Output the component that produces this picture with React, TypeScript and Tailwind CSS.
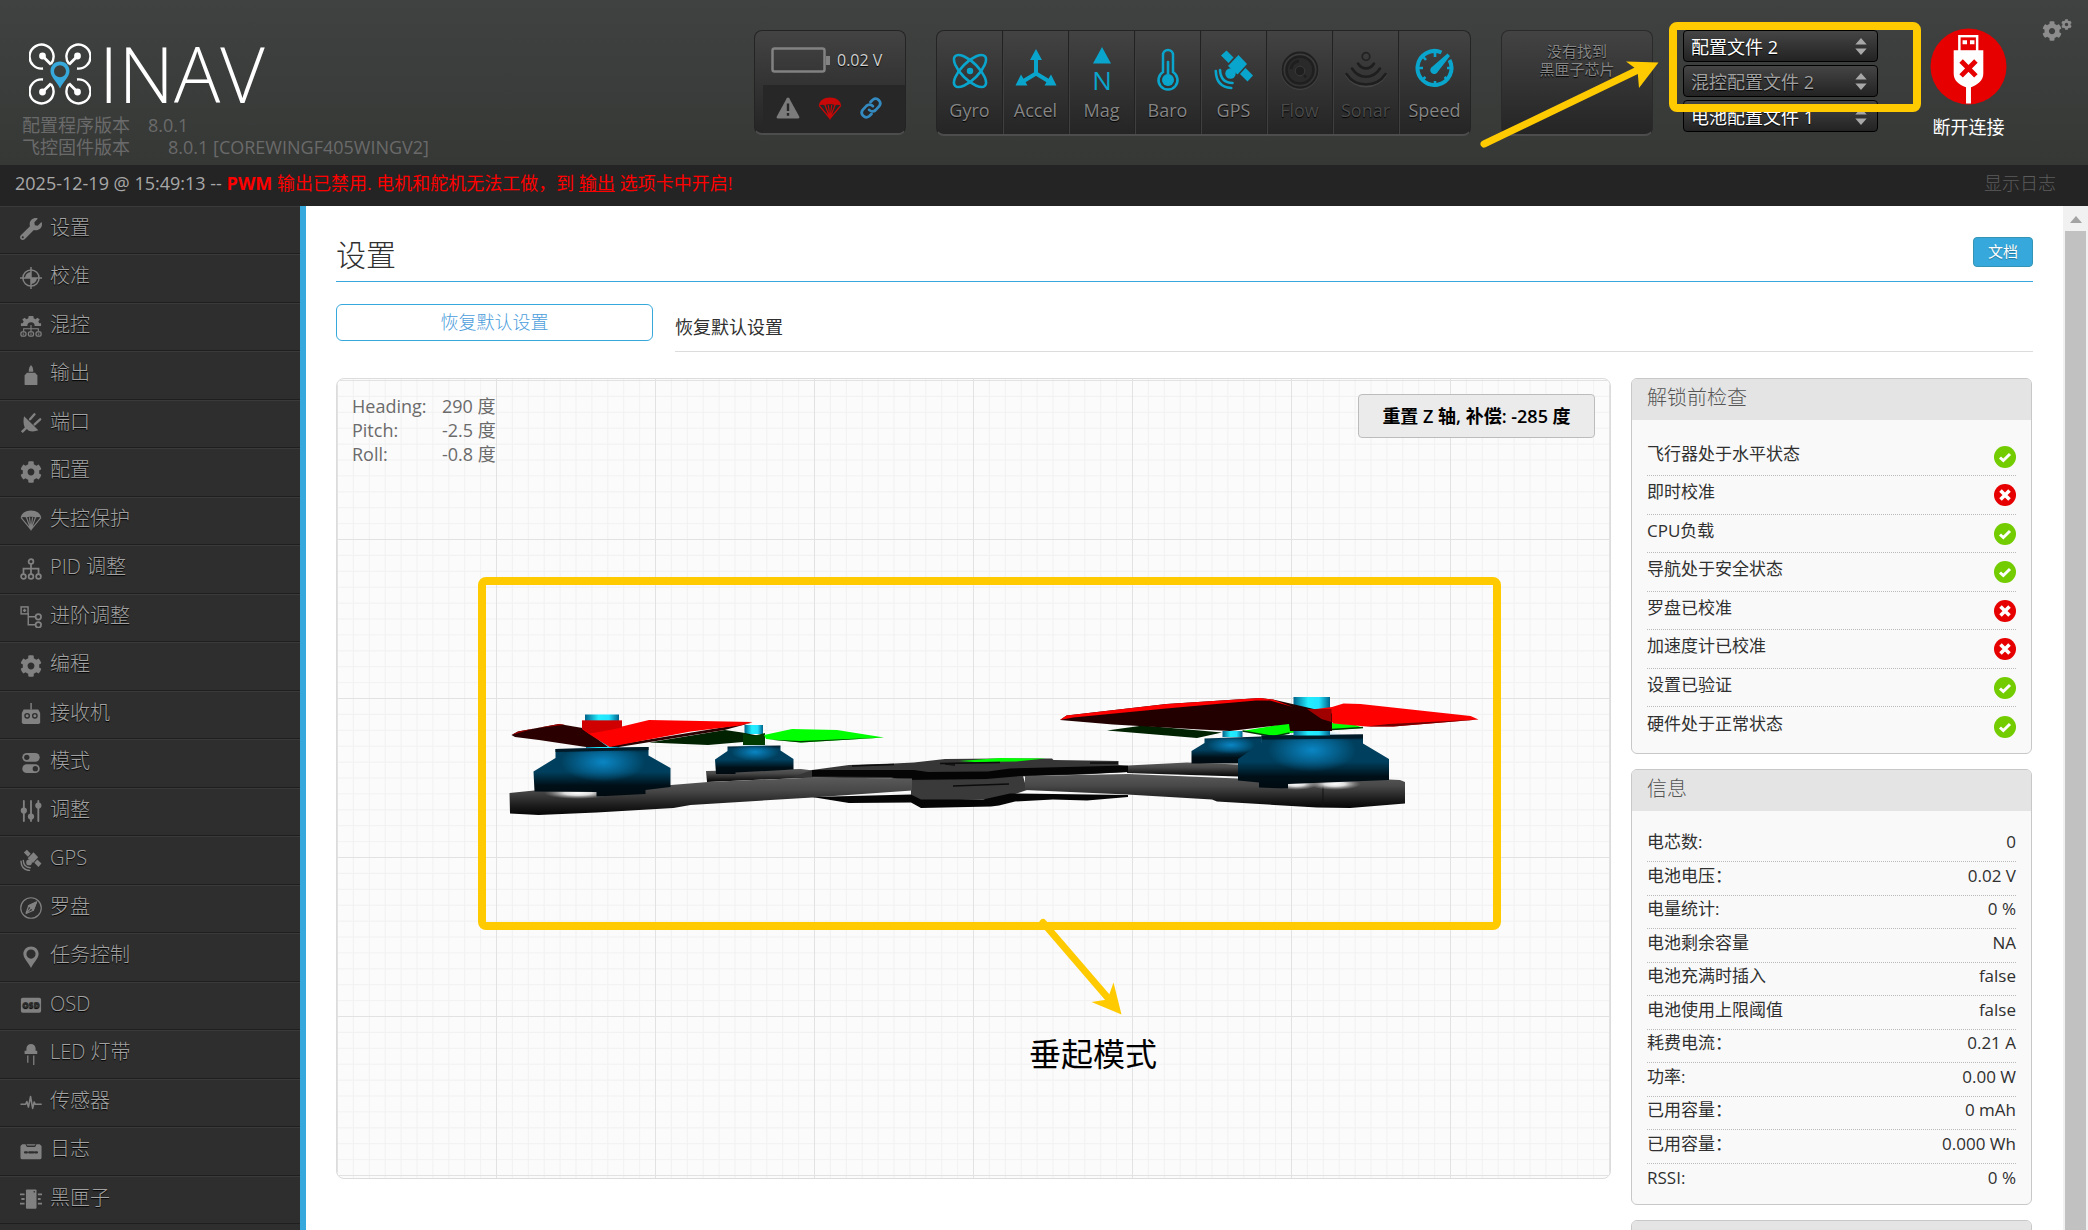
import React from 'react';
import { FaCog, FaWrench } from 'react-icons/fa';

interface IconProps {
  className?: string;
}

interface CheckItem {
  label: string;
  ok: boolean;
}

interface InfoItem {
  label: string;
  value: string;
}

/* ---------- shared icons ---------- */

const SatelliteIcon: React.FC<IconProps> = ({ className }) => (
  <svg viewBox="0 0 40 40" className={className} fill="currentColor" aria-hidden="true">
    <path d="M12.500 1.500l7 7-5 5.500-7.500-7.500z" />
    <path d="M24.500 6l8.500 9-9.500 10.500-9.500-8.500z" />
    <path d="M31.500 19l7.500 7.500-5.500 6-7.500-7.500z" />
    <circle cx="16.500" cy="24.500" r="5.200" />
    <path d="M6 21c.5 8.500 5 13 12.500 13M1.800 22c.4 11.500 6 16.500 15.500 17" fill="none" stroke="currentColor" strokeWidth="2.600" strokeLinecap="round" />
  </svg>
);

const ParachuteIcon: React.FC<IconProps> = ({ className }) => (
  <svg viewBox="0 0 24 24" className={className} fill="currentColor" aria-hidden="true">
    <path d="M.8 10C1 4.800 6 1.500 12 1.500s11 3.300 11.200 8.500c-2-1.600-4.400-1.600-6.200-.6-1.800-1.400-8.200-1.400-10 0-1.800-1-4.200-1-6.200.6z" />
    <path d="M1.200 9.500L12 22.500l10.800-13M7 9l5 13.500L17 9M10.300 9L12 22.500 13.700 9" fill="none" stroke="currentColor" strokeWidth="1.200" />
  </svg>
);

/* ---------- sidebar icons ---------- */

const TargetIcon: React.FC<IconProps> = ({ className }) => (
  <svg viewBox="0 0 24 24" className={className} fill="none" stroke="currentColor" strokeWidth="1.600" aria-hidden="true">
    <circle cx="12" cy="12" r="8.800" />
    <path d="M12 0v24M0 12h24" />
    <path d="M12 12V5.500A6.500 6.500 0 0 0 5.500 12zM12 12v6.500a6.500 6.500 0 0 0 6.500-6.500z" fill="currentColor" stroke="none" />
  </svg>
);

const MixerIcon: React.FC<IconProps> = ({ className }) => (
  <svg viewBox="0 0 24 24" className={className} fill="currentColor" aria-hidden="true">
    <path d="M1 12V9h2l1-2-1.500-2L5 3l2 1.500L9 3.500 9.500 1h5l.5 2.500 2 1L19 3l2.500 2L20 7l1 2h2v3h-7a4 4 0 0 0-8 0z" />
    <path d="M12 11v7M4 18v-3h16v3" fill="none" stroke="currentColor" strokeWidth="1.200" />
    <g fill="none" stroke="currentColor" strokeWidth="1.400">
      <rect x="1" y="18.500" width="5.500" height="4.500" rx="1.500" />
      <rect x="9.200" y="18.500" width="5.500" height="4.500" rx="1.500" />
      <rect x="17.500" y="18.500" width="5.500" height="4.500" rx="1.500" />
      <path d="M3 20.800h1.500M11.200 20.800h1.500M19.500 20.800H21" />
    </g>
  </svg>
);

const OutputIcon: React.FC<IconProps> = ({ className }) => (
  <svg viewBox="0 0 24 24" className={className} fill="currentColor" aria-hidden="true">
    <path d="M12 1c1.500 1.500 2.500 3.500 2.500 7.500h-5C9.500 4.500 10.500 2.500 12 1z" />
    <path d="M7.500 9.500h9l2.500 3V22a1 1 0 0 1-1 1H6a1 1 0 0 1-1-1v-9.500z" />
  </svg>
);

const PlugIcon: React.FC<IconProps> = ({ className }) => (
  <svg viewBox="0 0 24 24" className={className} fill="currentColor" aria-hidden="true">
    <path d="M4.500 4.500l15.500 15.500c-3.500 1.500-7.500 1.500-10.500.5l-2-2-4.500 4.500-2-2 4.200-4.200C3.500 13 3.500 8 4.500 4.500z" />
    <path d="M11 8l4.800-5.500M16 13.500l6-5.500" stroke="currentColor" strokeWidth="2.600" strokeLinecap="round" />
  </svg>
);

const TreeIcon: React.FC<IconProps> = ({ className }) => (
  <svg viewBox="0 0 24 24" className={className} fill="none" stroke="currentColor" strokeWidth="1.900" aria-hidden="true">
    <circle cx="12" cy="3.800" r="2.600" />
    <circle cx="3.800" cy="20.200" r="2.600" />
    <circle cx="12" cy="20.200" r="2.600" />
    <circle cx="20.200" cy="20.200" r="2.600" />
    <path d="M12 6.500v11M3.800 17.500v-6h16.400v6" />
  </svg>
);

const BranchIcon: React.FC<IconProps> = ({ className }) => (
  <svg viewBox="0 0 24 24" className={className} fill="none" stroke="currentColor" strokeWidth="1.600" aria-hidden="true">
    <rect x="1.200" y="1" width="7.600" height="7.600" />
    <path d="M5 3v3.600M3.200 4.800h3.600M9 8v12.500h8M9 11.800h8" />
    <circle cx="20" cy="11.800" r="3" strokeWidth="1.900" />
    <circle cx="20" cy="20.500" r="3" strokeWidth="1.900" />
  </svg>
);

const ReceiverIcon: React.FC<IconProps> = ({ className }) => (
  <svg viewBox="0 0 24 24" className={className} aria-hidden="true">
    <path d="M11.300 0h1.600v7h-1.600z" fill="currentColor" />
    <path d="M4 7h16l2 4v10a2 2 0 0 1-2 2H4a2 2 0 0 1-2-2V11z" fill="currentColor" />
    <circle cx="7.800" cy="14" r="2.400" fill="none" stroke="#2e2e2e" strokeWidth="1.500" />
    <circle cx="16.200" cy="14" r="2.400" fill="none" stroke="#2e2e2e" strokeWidth="1.500" />
  </svg>
);

const ModesIcon: React.FC<IconProps> = ({ className }) => (
  <svg viewBox="0 0 24 24" className={className} aria-hidden="true">
    <rect x="2.500" y="1" width="19" height="9.600" rx="4.800" fill="currentColor" />
    <rect x="2.500" y="13.400" width="19" height="9.600" rx="4.800" fill="currentColor" />
    <circle cx="7.400" cy="5.800" r="2.900" fill="#2e2e2e" />
    <circle cx="16.700" cy="18.200" r="2.900" fill="#2e2e2e" />
  </svg>
);

const SlidersIcon: React.FC<IconProps> = ({ className }) => (
  <svg viewBox="0 0 24 24" className={className} fill="currentColor" stroke="currentColor" strokeLinecap="round" aria-hidden="true">
    <path d="M4.200 1v22M12 1v22M20 1v22" strokeWidth="2" />
    <circle cx="4.200" cy="11.500" r="3.400" stroke="none" />
    <circle cx="12" cy="18" r="3.400" stroke="none" />
    <circle cx="20" cy="6" r="3.400" stroke="none" />
  </svg>
);

const CompassIcon: React.FC<IconProps> = ({ className }) => (
  <svg viewBox="0 0 24 24" className={className} fill="none" stroke="currentColor" strokeWidth="1.300" aria-hidden="true">
    <circle cx="12" cy="12" r="11.200" />
    <path d="M18 5.500L9.500 9.500 6.500 18z" />
    <path d="M18 5.500L9.500 9.500l5 5z" fill="currentColor" />
    <path d="M6.500 18l8-3.500L18 5.500" />
  </svg>
);

const MarkerIcon: React.FC<IconProps> = ({ className }) => (
  <svg viewBox="0 0 24 24" className={className} fill="currentColor" fillRule="evenodd" aria-hidden="true">
    <path d="M12 .5c4.700 0 8.300 3.500 8.300 8C20.300 13.500 15 18 12 24 9 18 3.700 13.500 3.700 8.500c0-4.500 3.600-8 8.300-8zm0 3.300a5 5 0 1 0 0 10 5 5 0 0 0 0-10z" />
  </svg>
);

const OsdIcon: React.FC<IconProps> = ({ className }) => (
  <svg viewBox="0 0 24 24" className={className} aria-hidden="true">
    <rect x="1" y="4" width="22" height="16.500" rx="2" fill="currentColor" />
    <text x="12" y="15.500" textAnchor="middle" fontSize="9" fontWeight="800" fontFamily="Open Sans, sans-serif" fill="#2e2e2e">OSD</text>
  </svg>
);

const LedIcon: React.FC<IconProps> = ({ className }) => (
  <svg viewBox="0 0 24 24" className={className} fill="currentColor" aria-hidden="true">
    <path d="M7 8.500V6a5 5 0 0 1 10 0v2.500h1.800V12H5V8.500z" />
    <path d="M8.500 13.500v8M15 13.500V24" stroke="currentColor" strokeWidth="1.400" />
  </svg>
);

const PulseIcon: React.FC<IconProps> = ({ className }) => (
  <svg viewBox="0 0 24 24" className={className} fill="none" stroke="currentColor" strokeWidth="1.700" strokeLinejoin="round" aria-hidden="true">
    <path d="M.5 14.500H6l1.500-3 1.700 6L11.500 6l2.300 13 1.700-7 1.200 2.500h7" />
  </svg>
);

const LogIcon: React.FC<IconProps> = ({ className }) => (
  <svg viewBox="0 0 24 24" className={className} aria-hidden="true">
    <path d="M2.500 4.500H6l1.500 3h9l1.500-3h3.500l2 2V19a2 2 0 0 1-2 2h-19a2 2 0 0 1-2-2V6.500z" fill="currentColor" />
    <path d="M7 4.500h10l-1 1.600H8z" fill="currentColor" />
    <path d="M5.500 13.500h2M10 13.500h4.500M16.500 13.500h2" stroke="#2e2e2e" strokeWidth="2.400" strokeLinecap="round" />
  </svg>
);

const ChipIcon: React.FC<IconProps> = ({ className }) => (
  <svg viewBox="0 0 24 24" className={className} aria-hidden="true">
    <rect x="6.500" y="1.500" width="11.500" height="21" rx="1" fill="currentColor" />
    <circle cx="15.500" cy="4.200" r=".9" fill="#2e2e2e" />
    <path d="M0 7h5M1.500 12H5M0 17h5M19.500 7h4.500M19.500 12h3M19.500 17h4.500" stroke="currentColor" strokeWidth="2" />
  </svg>
);

const MENU: { label: string; icon: React.ComponentType<IconProps> }[] = [
  { label: '设置', icon: FaWrench },
  { label: '校准', icon: TargetIcon },
  { label: '混控', icon: MixerIcon },
  { label: '输出', icon: OutputIcon },
  { label: '端口', icon: PlugIcon },
  { label: '配置', icon: FaCog },
  { label: '失控保护', icon: ParachuteIcon },
  { label: 'PID 调整', icon: TreeIcon },
  { label: '进阶调整', icon: BranchIcon },
  { label: '编程', icon: FaCog },
  { label: '接收机', icon: ReceiverIcon },
  { label: '模式', icon: ModesIcon },
  { label: '调整', icon: SlidersIcon },
  { label: 'GPS', icon: SatelliteIcon },
  { label: '罗盘', icon: CompassIcon },
  { label: '任务控制', icon: MarkerIcon },
  { label: 'OSD', icon: OsdIcon },
  { label: 'LED 灯带', icon: LedIcon },
  { label: '传感器', icon: PulseIcon },
  { label: '日志', icon: LogIcon },
  { label: '黑匣子', icon: ChipIcon },
];

/* ---------- sensor icons ---------- */

const GyroIcon: React.FC<IconProps> = ({ className }) => (
  <svg viewBox="0 0 44 44" className={className} fill="none" stroke="currentColor" strokeWidth="2.600" aria-hidden="true">
    <ellipse cx="22" cy="24" rx="21" ry="8.500" transform="rotate(45 22 24)" />
    <ellipse cx="22" cy="24" rx="21" ry="8.500" transform="rotate(-45 22 24)" />
    <circle cx="22" cy="24" r="3.200" fill="currentColor" stroke="none" />
  </svg>
);

const AccelIcon: React.FC<IconProps> = ({ className }) => (
  <svg viewBox="0 0 44 44" className={className} fill="currentColor" aria-hidden="true">
    <path d="M22 2l6 11H16zM1.500 38.500L7 27.500l6.500 11zM42.500 38.500L37 27.500l-6.500 11z" />
    <path d="M22 10v16.500M22 26.500L8 35M22 26.500L36 35" stroke="currentColor" strokeWidth="4" />
  </svg>
);

const MagIcon: React.FC<IconProps> = ({ className }) => (
  <svg viewBox="0 0 44 44" className={`overflow-visible ${className}`} fill="currentColor" aria-hidden="true">
    <path d="M22 0l9 16.500H13z" />
    <text x="22" y="43" textAnchor="middle" fontSize="26" fontFamily="Open Sans, sans-serif">N</text>
  </svg>
);

const BaroIcon: React.FC<IconProps> = ({ className }) => (
  <svg viewBox="0 0 44 44" className={className} fill="none" stroke="currentColor" aria-hidden="true">
    <path d="M17 25V8a5 5 0 0 1 10 0v17a9.500 9.500 0 1 1-10 0z" strokeWidth="2.500" />
    <path d="M22 15v18" strokeWidth="2.600" strokeLinecap="round" />
    <circle cx="22" cy="33" r="6" fill="currentColor" stroke="none" />
  </svg>
);

const FlowIcon: React.FC<IconProps> = ({ className }) => (
  <svg viewBox="0 0 44 44" className={className} fill="none" stroke="#1f1f1f" aria-hidden="true">
    <circle cx="22" cy="24" r="18.500" stroke="#414141" strokeWidth="1" />
    <circle cx="22" cy="23" r="17.500" strokeWidth="1.800" />
    <circle cx="22" cy="23" r="13.500" fill="#2a2a2a" strokeWidth="2.600" />
    <circle cx="22" cy="24" r="4.800" fill="#1f1f1f" stroke="#3a3a3a" />
    <path d="M13 22a9 9 0 0 1 8-8M26 30l2-1.500" strokeWidth="3" />
  </svg>
);

const SonarIcon: React.FC<IconProps> = ({ className }) => (
  <svg viewBox="0 0 44 44" className={className} fill="none" strokeLinecap="round" aria-hidden="true">
    <path d="M2.500 28c9 14.500 30 14.500 39 0" stroke="#454545" strokeWidth="3" />
    <path d="M2.500 27c9 14 30 14 39 0M8 21.500c7 11 21 11 28 0M14 16.500c4 6.500 12 6.500 16 0" stroke="#1e1e1e" strokeWidth="2.600" />
    <circle cx="22" cy="9.500" r="3.800" stroke="#232323" strokeWidth="1.800" />
  </svg>
);

const SpeedIcon: React.FC<IconProps> = ({ className }) => (
  <svg viewBox="0 0 44 44" className={className} fill="none" stroke="currentColor" aria-hidden="true">
    <path d="M28.500 5.500A17 17 0 1 0 36.500 13" strokeWidth="4" />
    <path d="M22 5v5M10 9.500l3 3.500M5 21h5M9 33l3.500-3M22 38v-4M35 33l-3.500-3M39 21h-5" strokeWidth="2.600" />
    <path d="M34.500 6.500L37 9 25 24.500a4 4 0 1 1-5.500-5z" fill="currentColor" stroke="none" />
  </svg>
);

const SENSORS = [
  { label: 'Gyro', icon: GyroIcon, on: true },
  { label: 'Accel', icon: AccelIcon, on: true },
  { label: 'Mag', icon: MagIcon, on: true },
  { label: 'Baro', icon: BaroIcon, on: true },
  { label: 'GPS', icon: SatelliteIcon, on: true },
  { label: 'Flow', icon: FlowIcon, on: false },
  { label: 'Sonar', icon: SonarIcon, on: false },
  { label: 'Speed', icon: SpeedIcon, on: true },
];

const CHECKS: CheckItem[] = [
  { label: '飞行器处于水平状态', ok: true },
  { label: '即时校准', ok: false },
  { label: 'CPU负载', ok: true },
  { label: '导航处于安全状态', ok: true },
  { label: '罗盘已校准', ok: false },
  { label: '加速度计已校准', ok: false },
  { label: '设置已验证', ok: true },
  { label: '硬件处于正常状态', ok: true },
];

const INFO: InfoItem[] = [
  { label: '电芯数:', value: '0' },
  { label: '电池电压：', value: '0.02 V' },
  { label: '电量统计:', value: '0 %' },
  { label: '电池剩余容量', value: 'NA' },
  { label: '电池充满时插入', value: 'false' },
  { label: '电池使用上限阈值', value: 'false' },
  { label: '耗费电流：', value: '0.21 A' },
  { label: '功率:', value: '0.00 W' },
  { label: '已用容量：', value: '0 mAh' },
  { label: '已用容量：', value: '0.000 Wh' },
  { label: 'RSSI:', value: '0 %' },
];

/* ---------- header ---------- */

const Logo = () => (
  <div className="flex items-center gap-2 h-[62px]">
    <svg viewBox="0 0 62 62" className="w-[62px] h-[62px]" fill="none" aria-hidden="true">
      <g stroke="#fff" strokeWidth="2.400">
        <path d="M22 21a12 12 0 1 0-8 4.500M40 21a12 12 0 1 1 8 4.500M22 41a12 12 0 1 1-8-4.500M40 41a12 12 0 1 0 8-4.500" />
        <path d="M14 13.500l8 8M48 13.500l-8 8M14 48.500l8-8M48 48.500l-8-8" strokeWidth="2.800" />
      </g>
      <g fill="#fff">
        <circle cx="13.500" cy="13" r="3.400" />
        <circle cx="48.500" cy="13" r="3.400" />
        <circle cx="13.500" cy="49" r="3.400" />
        <circle cx="48.500" cy="49" r="3.400" />
      </g>
      <path d="M31 18.500c5.500 0 9.500 4.200 9.500 9.500 0 6-6 10-9.500 17.500C27.500 38 21.500 34 21.500 28c0-5.300 4-9.500 9.500-9.500zm0 3.700a6 6 0 1 0 0 12 6 6 0 0 0 0-12z" fill="#37a8db" fillRule="evenodd" />
    </svg>
    <span className="text-[77px] leading-[62px] font-light text-white">INAV</span>
  </div>
);

const Battery = () => (
  <div className="w-[152px] h-[105px] flex flex-col rounded-lg border border-[#242424] border-b-2 border-b-[#4d4d4d] bg-gradient-to-b from-[#434343] to-[#252525] overflow-hidden">
    <div className="flex items-center gap-[6px] h-[54px] pl-4 pt-1">
      <svg viewBox="0 0 60 26" className="w-[60px] h-[26px]" fill="none" aria-hidden="true">
        <rect x="1.500" y="1.500" width="52" height="23" rx="2" stroke="#828282" strokeWidth="2.500" />
        <path d="M55 9h4v9h-4z" fill="#828282" />
      </svg>
      <span className="text-[16px] leading-6 text-[#d0d0d0] [text-shadow:0_1px_1px_#000]">0.02 V</span>
    </div>
    <div className="flex-1 ml-2 pl-[13px] pb-[2px] flex items-center gap-[18px] bg-[#272727]">
      <svg viewBox="0 0 24 22" className="w-6 h-[22px]" aria-label="警告">
        <path d="M10.800 1.200q1.200-1.600 2.400 0l10 18.300q.5 2-1.200 2H2q-1.700 0-1.200-2z" fill="#7b7b7b" />
        <path d="M12 6.500v7.500M12 16v2.800" stroke="#272727" strokeWidth="2.400" />
      </svg>
      <ParachuteIcon className="w-6 h-6 text-[#c80808]" />
      <svg viewBox="0 0 24 24" className="w-[22px] h-[22px]" fill="none" stroke="#3489bf" strokeWidth="3" strokeLinecap="round" aria-label="连接">
        <path d="M10 14a5 5 0 0 0 7 .3l4-4.300a5 5 0 0 0-7-7l-2.500 2.500" />
        <path d="M14 10a5 5 0 0 0-7-.3L3 14a5 5 0 0 0 7 7l2.500-2.500" />
      </svg>
    </div>
  </div>
);

const ProfileSelect = ({ label, text, className }: { label: string; text: string; className: string }) => (
  <div className="relative h-8">
    <select
      aria-label={label}
      className={`appearance-none w-full h-8 pl-[7px] pt-[2px] text-[18px] leading-7 rounded border border-black bg-gradient-to-b from-[#454545] to-[#232323] [text-shadow:0_1px_1px_#000] ${className}`}
    >
      <option>{text}</option>
    </select>
    <svg viewBox="0 0 12 18" className="absolute right-[11px] top-2 w-3 h-[17px] pointer-events-none" fill="#a8a8a8" aria-hidden="true">
      <path d="M6 0l6 7H0zM6 18l6-7H0z" />
    </svg>
  </div>
);

const Header = () => (
  <header className="flex items-start h-[165px] shrink-0 pl-[22px] pr-4 bg-gradient-to-b from-[#3f4240] to-[#363836]">
    <div className="flex-1 pt-[43px] text-[18px] leading-[22px] text-[#6a6a6a]">
      <div className="pl-[7px]">
        <Logo />
      </div>
      <div className="flex gap-[18px] pt-[9px]">
        <span>配置程序版本</span>
        <span>8.0.1</span>
      </div>
      <div className="flex gap-[38px]">
        <span>飞控固件版本</span>
        <span>8.0.1 [COREWINGF405WINGV2]</span>
      </div>
    </div>

    <div className="flex gap-[30px] pt-[30px]">
      <Battery />

      <ul className="flex w-[535px] h-[106px] rounded-lg border border-[#242424] border-b-2 border-b-[#4d4d4d] bg-gradient-to-b from-[#434343] to-[#252525]">
        {SENSORS.map(({ label, icon: Icon, on }) => (
          <li
            key={label}
            className="w-[66px] last:w-auto last:flex-1 flex flex-col items-center pt-4 border-r border-r-[#222] shadow-[1px_0_0_#3f3f3f] last:border-r-0 last:shadow-none"
          >
            <Icon className={label === 'GPS' ? 'w-10 h-11 text-[#0aa5cc]' : 'w-11 h-11 text-[#0aa5cc]'} />
            <span className={`mt-[7px] text-[18px] leading-6 [text-shadow:0_1px_1px_#000] ${on ? 'text-[#858585]' : 'text-[#4a4a4a]'}`}>
              {label}
            </span>
          </li>
        ))}
      </ul>

      <div className="w-[152px] h-[106px] pt-[11px] text-center text-[15px] leading-[18px] text-[#868686] [text-shadow:0_1px_1px_#000] rounded-lg border border-[#2a2a2a] border-b-2 border-b-[#4d4d4d] bg-gradient-to-b from-[#434343] to-[#252525]">
        没有找到
        <br />
        黑匣子芯片
      </div>

      <div className="relative w-[195px] flex flex-col gap-[3px]">
        <ProfileSelect label="配置文件" text="配置文件 2" className="text-white" />
        <ProfileSelect label="混控配置文件" text="混控配置文件 2" className="text-[#a0a0a0]" />
        <ProfileSelect label="电池配置文件" text="电池配置文件 1" className="text-white" />

        {/* highlight around the first two profiles */}
        <div className="absolute -left-[14px] -top-2 w-[252px] h-[90px] border-8 border-[#ffcb00] rounded-lg pointer-events-none" />
        <svg viewBox="1478 58 182 92" className="absolute -left-[205px] top-7 w-[182px] h-[92px] pointer-events-none" aria-hidden="true">
          <path d="M1484 144L1640 69" stroke="#ffcb00" strokeWidth="7" strokeLinecap="round" />
          <path d="M1658.500 62.500L1626 61.500l11.500 8.500 1.500 18z" fill="#ffcb00" />
        </svg>
      </div>
    </div>

    <button type="button" className="ml-[52px] mt-[28px] w-[77px] flex flex-col items-center gap-2 text-[18px] leading-7 text-white">
      <svg viewBox="0 0 78 78" className="w-[77px] h-[77px]" aria-hidden="true">
        <circle cx="39" cy="39" r="38.500" fill="#e60000" />
        <path d="M28.500 7h20.500v15.500h5V46c0 7-5.500 11-12.500 14v16.500h-5V60C29 57 24 53 24 46V22.500h4.500z" fill="#fff" />
        <path d="M31 9.500h15.500v13H31z" fill="#e60000" />
        <path d="M33 12.500h4.500v4H33zM40.500 12.500H45v4h-4.500z" fill="#fff" />
        <path d="M31.500 33.500l15 15M46.500 33.500l-15 15" stroke="#e60000" strokeWidth="5" />
      </svg>
      <span className="whitespace-nowrap">断开连接</span>
    </button>

    <button type="button" aria-label="选项" className="ml-[35px] mt-[19px] flex items-start text-[#8c8c8c]">
      <FaCog className="w-5 h-5 mt-[2px]" />
      <FaCog className="w-[11px] h-[11px] -ml-px" />
    </button>
  </header>
);

/* ---------- craft preview ---------- */

const CraftView = () => (
  <svg viewBox="337 379 1273 799" className="absolute inset-0 w-full h-full pointer-events-none" aria-hidden="true">
    <defs>
      <linearGradient id="arm" x1="0" y1="0" x2="0" y2="1">
        <stop offset="0" stopColor="#5a5a5a" />
        <stop offset="0.35" stopColor="#484848" />
        <stop offset="0.75" stopColor="#1c1c1c" />
        <stop offset="1" stopColor="#050505" />
      </linearGradient>
      <linearGradient id="motor" x1="0" y1="0" x2="0" y2="1">
        <stop offset="0" stopColor="#001a28" />
        <stop offset="0.12" stopColor="#00405e" />
        <stop offset="0.5" stopColor="#00405e" />
        <stop offset="0.78" stopColor="#000f17" />
        <stop offset="1" stopColor="#000a10" />
      </linearGradient>
      <radialGradient id="shine">
        <stop offset="0" stopColor="#0a86c4" />
        <stop offset="1" stopColor="#0a86c4" stopOpacity="0" />
      </radialGradient>
      <linearGradient id="shaft">
        <stop offset="0" stopColor="#00628a" />
        <stop offset="0.4" stopColor="#22eeff" />
        <stop offset="0.7" stopColor="#22e4ff" />
        <stop offset="1" stopColor="#00628a" />
      </linearGradient>
      <radialGradient id="glare">
        <stop offset="0" stopColor="#fff" />
        <stop offset="0.4" stopColor="#ddd" />
        <stop offset="1" stopColor="#999" stopOpacity="0" />
      </radialGradient>
    </defs>

    {/* rear arms and motors */}
    <path d="M706 771L801 769l12 1.500v7L707 782z" fill="url(#arm)" />
    <path d="M727.500 746.500l53-1v5l13 8.500v10.500l-58 3v1.500H716l-1-14.500 12.500-8.500z" fill="url(#motor)" />
    <ellipse cx="755" cy="752" rx="24" ry="9" fill="url(#shine)" />
    <path d="M744.500 725h18.500v9h-18.500z" fill="url(#shaft)" />
    <path d="M649 742.500l76-12.500 17 2.500 23 4.500-22 5-35 3z" fill="#002200" />
    <path d="M743 733l10 3 12-3v12h-22z" fill="#023b02" />
    <path d="M764 735l28-6 45 1 47 7.500-83 5-35-3.500z" fill="#00ff00" />
    <path d="M884 737.500l-83 5-33-3 32 1.500z" fill="#003c00" />

    <path d="M1128 765.500l59-3 51 2v12l-111-3.500z" fill="url(#arm)" />
    <path d="M1204.500 738.500l57-2V763.500h-70V751l13-8z" fill="url(#motor)" />
    <ellipse cx="1231" cy="745" rx="24" ry="9" fill="url(#shine)" />
    <path d="M1222.500 731h20v6h-20z" fill="url(#shaft)" />
    <path d="M1107 730.500l36-5 79 7-25 5.500z" fill="#002200" />
    <path d="M1242.500 731l47-8 43 0 23 2 8 3-30 2-43 3-17 3.500z" fill="#00ff00" />
    <path d="M1242.500 731l31 5.500 16-3.500M1332 729.500l31-2" stroke="#003c00" strokeWidth="1.500" fill="none" />

    {/* centre plates */}
    <path d="M911 776h112l4 14-27 9-80 2-9-6z" fill="#3a3a3a" />
    <path d="M812 770l37-5 45-1.500 20-1 31-3.500 55-.5h52l1.500 1.500 65 1v4l9.500 1v6l-45 2.500-63 2-34 3-85 1-10-2-99-1z" fill="#363636" />
    <path d="M812 770l102 0 14 2 60-.5 22-3 118-3v6.500l-45 2-63 2-34 3-85 1-10-3-79-.5z" fill="#050505" />
    <path d="M959 761l41-3 46 .5-30 3-41 .5z" fill="#00ff00" />
    <path d="M852 766l42-1.500M940 763.500l60-1M953 786l56-2M1090 763h28M945 764l10 1" stroke="#0c0c0c" strokeWidth="1.600" />
    <path d="M812 797l99-2.500 10 5h62l27-6 118 1.500v2l-41 3.500-34-1-38 2-16 4-8 1-70 1.500-10-5.500-62 .5z" fill="#050505" />

    {/* front arms */}
    <path d="M509.500 793L534 790.500l137-5.500 37-3 106-4.500 98 1V790.500l-99.500 7-122 7.500-17 3-77 4.500-58 2.500-28.500-1.500z" fill="url(#arm)" />
    <path d="M1025 776l103-2 110 4.500 151 1 11 .5 5 2v21.500l-55 4.500-33-.5-100-6-5-2-85-5-102-4.500z" fill="url(#arm)" />
    <path d="M1322 783h2v24h-2z" fill="#111" opacity=".5" />
    <ellipse cx="578" cy="793" rx="34" ry="6" fill="url(#glare)" />
    <ellipse cx="1296" cy="784" rx="22" ry="6" fill="url(#glare)" />
    <ellipse cx="1335" cy="784" rx="26" ry="6" fill="url(#glare)" />

    {/* front left motor and propeller */}
    <path d="M555.500 749l93-2v8.500l22 12.500v19l-25 3v4l-49 2.500V792l-62-.5-1-20 22-13.500z" fill="url(#motor)" />
    <ellipse cx="603" cy="762" rx="42" ry="20" fill="url(#shine)" />
    <path d="M555.500 749l93-2v3l-93 2z" fill="#001a28" />
    <path d="M585 714.500h34v7h-34zM586 738h33v10h-33z" fill="url(#shaft)" />
    <path d="M511.500 735l6.500-3.500 41-7.500 23.500 4L608 747h-22l-47-7-24-3z" fill="#2a0000" />
    <path d="M511.500 735l6.500-3.500 41-7.500 6 .7-30 3.500z" fill="#a00000" />
    <path d="M752.500 722.500l-28 7.500L619 747h-10l6-2z" fill="#2a0000" />
    <path d="M582 720.500h40v6l27-6.500 103.500 2-12 3.500-50 6L614.500 746l-5 1L589 734l-7-5z" fill="#ff0000" />
    <path d="M582 720.500h40v7q-20 4-33 6l-7-5z" fill="#b00000" opacity=".6" />

    {/* front right motor and propeller */}
    <path d="M1261.500 735.500l101.500-1v9l26 15.500v21l-101 4v4.500l-29-1v-5l-21-2V759l23-15.500z" fill="url(#motor)" />
    <ellipse cx="1312" cy="750" rx="44" ry="22" fill="url(#shine)" />
    <path d="M1261.500 735.500l101.500-1v4l-101.500 1z" fill="#001a28" />
    <path d="M1293.500 697h36.500v14h-36.500zM1293.500 729h36.500v6.500h-36.500z" fill="url(#shaft)" />
    <path d="M1316 709l16-2 11.500-3.500 17 .5 110 12 8 3.500-85 7h-27l-33-3z" fill="#ff0000" />
    <path d="M1478.500 719.500l-85 7h-27l22-2.500z" fill="#700000" />
    <path d="M1060 720l6.500-4.500 100-11.500 93.500-6 13 1.500 43 10 16 4v17.500h-42l-1-7-59 7-30-1.500-87-5z" fill="#220000" />
    <path d="M1060 720l6.500-4.500 100-11.500 93.500-6 13 1.500 20 7.500-23-6.500-14 0-90 8-93 9z" fill="#ff0000" />
    <path d="M1307 709h24.500v13l-10-3z" fill="#a00000" />

    {/* callout */}
    <rect x="482" y="581" width="1015" height="345" rx="4" fill="none" stroke="#ffcb00" strokeWidth="8" />
    <path d="M1043 922.500L1108 998" stroke="#ffcb00" strokeWidth="7" strokeLinecap="round" />
    <path d="M1121.500 1014.500l-8-32-6 17-16 2.500z" fill="#ffcb00" />
    <text x="1029" y="1066" fontSize="32" fontFamily="Noto Sans CJK SC, sans-serif" fill="#000">垂起模式</text>
  </svg>
);

const Grid = () => (
  <svg className="absolute inset-0 w-full h-full" aria-hidden="true">
    <defs>
      <pattern id="minor" width="15.9" height="15.9" patternUnits="userSpaceOnUse">
        <path d="M0 .5h16M.5 0v16" stroke="#f1f1f1" />
      </pattern>
      <pattern id="major" y="1" width="159" height="159" patternUnits="userSpaceOnUse">
        <rect width="159" height="159" fill="url(#minor)" />
        <path d="M0 .5h159M.5 0v159" stroke="#e2e2e2" />
      </pattern>
    </defs>
    <rect width="100%" height="100%" fill="url(#major)" />
  </svg>
);

/* ---------- right column ---------- */

const Panel = ({ title, children }: { title: string; children?: React.ReactNode }) => (
  <section className="rounded-md border border-[#c8c8c8] bg-[#f9f9f9] overflow-hidden">
    <h2 className="h-[41px] px-[15px] text-[20px] leading-[38px] font-light text-[#555] bg-[#e4e4e4]">{title}</h2>
    <div className="px-[15px] pt-[18px] pb-[7px]">{children}</div>
  </section>
);

const StatusIcon = ({ ok }: { ok: boolean }) => (
  <svg viewBox="0 0 22 22" className="w-[22px] h-[22px]" role="img" aria-label={ok ? '通过' : '未通过'} fill="none" stroke="#fff" strokeWidth="3">
    <circle cx="11" cy="11" r="11" fill={ok ? '#73cc00' : '#e60000'} stroke="none" />
    {ok ? <path d="M6 11.500l3.300 3L16 8" /> : <path d="M6.500 6.500l9 9M15.500 6.500l-9 9" strokeWidth="3.600" />}
  </svg>
);

const App = () => {
  return (
    <div className="h-screen flex flex-col overflow-hidden bg-[#2e2e2e] font-['Open_Sans','Noto_Sans_CJK_SC',sans-serif]">
      <Header />

      <div className="flex items-center justify-between h-[41px] shrink-0 pl-[15px] pr-8 pb-[5px] bg-[#242424] text-[18px] text-[#a8a8a8]">
        <p>
          2025-12-19 @ 15:49:13 --{' '}
          <span className="text-[#ff0000]">
            <b>PWM</b> 输出已禁用. 电机和舵机无法工做，到 <a href="#outputs" className="underline">输出</a> 选项卡中开启!
          </span>
        </p>
        <a href="#log" className="font-light text-[#5c5c5c]">显示日志</a>
      </div>

      <div className="flex-1 min-h-0 flex">
        <nav className="w-[306px] shrink-0 border-r-[6px] border-[#37a8db] overflow-hidden">
          <ul>
            {MENU.map(({ label, icon: Icon }) => (
              <li key={label} className="odd:h-12 even:h-[49px] border-t border-t-[#3a3a3a] border-b border-b-[#1f1f1f]">
                <a href="#tab" className="flex items-center gap-2 h-full pl-5 pb-[2px] text-[20px] leading-6 font-light text-[#a2a2a2] [text-shadow:0_1px_1px_#000]">
                  <Icon className="w-[22px] h-[22px] text-[#818181]" />
                  <span className="pb-[3px]">{label}</span>
                </a>
              </li>
            ))}
          </ul>
        </nav>

        <main className="flex-1 min-w-0 px-[30px] bg-white overflow-hidden">
          <div className="flex items-start justify-between h-[76px] pt-[31px] border-b border-[#37a8db]">
            <h1 className="text-[30px] leading-9 font-light text-[#303030]">设置</h1>
            <a href="#docs" className="w-[60px] h-[30px] text-center text-[15px] leading-[26px] text-white bg-[#37a8db] border border-[#3394b5] rounded [text-shadow:0_1px_1px_rgba(0,0,0,0.3)]">
              文档
            </a>
          </div>

          <div className="flex items-start gap-[22px] pt-[22px]">
            <button type="button" className="w-[317px] h-[37px] pb-[2px] shrink-0 text-[18px] leading-8 font-light text-[#4c9ddb] border border-[#37a8db] rounded-md">
              恢复默认设置
            </button>
            <p className="flex-1 h-12 pt-[9px] text-[18px] leading-7 text-[#303030] border-b border-[#dcdcdc]">恢复默认设置</p>
          </div>

          <div className="flex items-start gap-5 pt-[26px] pr-px">
            <section className="relative flex-1 min-w-0 h-[801px] bg-[#fbfbfb] border border-[#dcdcdc] rounded-lg overflow-hidden">
              <Grid />
              <CraftView />
              <div className="relative flex items-start justify-between pl-[15px] pr-[15px] pt-[15px]">
                <dl className="grid grid-cols-[90px_auto] text-[18px] leading-6 text-[#6b6b6b]">
                  <dt>Heading:</dt>
                  <dd>290 度</dd>
                  <dt>Pitch:</dt>
                  <dd>-2.5 度</dd>
                  <dt>Roll:</dt>
                  <dd>-0.8 度</dd>
                </dl>
                <button type="button" className="w-[237px] h-11 text-[18px] font-semibold text-black bg-[#ebebeb] border border-[#bcbcbc] rounded">
                  重置 Z 轴, 补偿: -285 度
                </button>
              </div>
            </section>

            <div className="w-[401px] shrink-0 flex flex-col gap-[15px]">
              <Panel title="解锁前检查">
                <ul>
                  {CHECKS.map(item => (
                    <li
                      key={item.label}
                      className="flex items-center justify-between odd:h-[38px] even:h-[39px] text-[17px] leading-8 text-[#303030] border-b border-dotted border-[#bbb] last:border-b-0"
                    >
                      <span className="pb-[6px]">{item.label}</span>
                      <StatusIcon ok={item.ok} />
                    </li>
                  ))}
                </ul>
              </Panel>

              <Panel title="信息">
                <dl>
                  {INFO.map((item, i) => (
                    <div
                      key={i}
                      className="flex items-center justify-between odd:h-[33px] even:h-[34px] pb-[6px] text-[17px] leading-[26px] text-[#303030] border-b border-dotted border-[#bbb] last:border-b-0"
                    >
                      <dt>{item.label}</dt>
                      <dd>{item.value}</dd>
                    </div>
                  ))}
                </dl>
              </Panel>

              <Panel title="" />
            </div>
          </div>
        </main>

        {/* scroll track */}
        <div className="w-[25px] shrink-0 flex flex-col items-center bg-[#f1f1f1]" aria-hidden="true">
          <svg viewBox="0 0 12 7" className="w-3 h-[7px] mt-[10px] mb-2" fill="#a3a3a3">
            <path d="M6 0l6 7H0z" />
          </svg>
          <div className="flex-1 w-[21px] bg-[#c1c1c1]" />
        </div>
      </div>
    </div>
  );
};

export default App;
